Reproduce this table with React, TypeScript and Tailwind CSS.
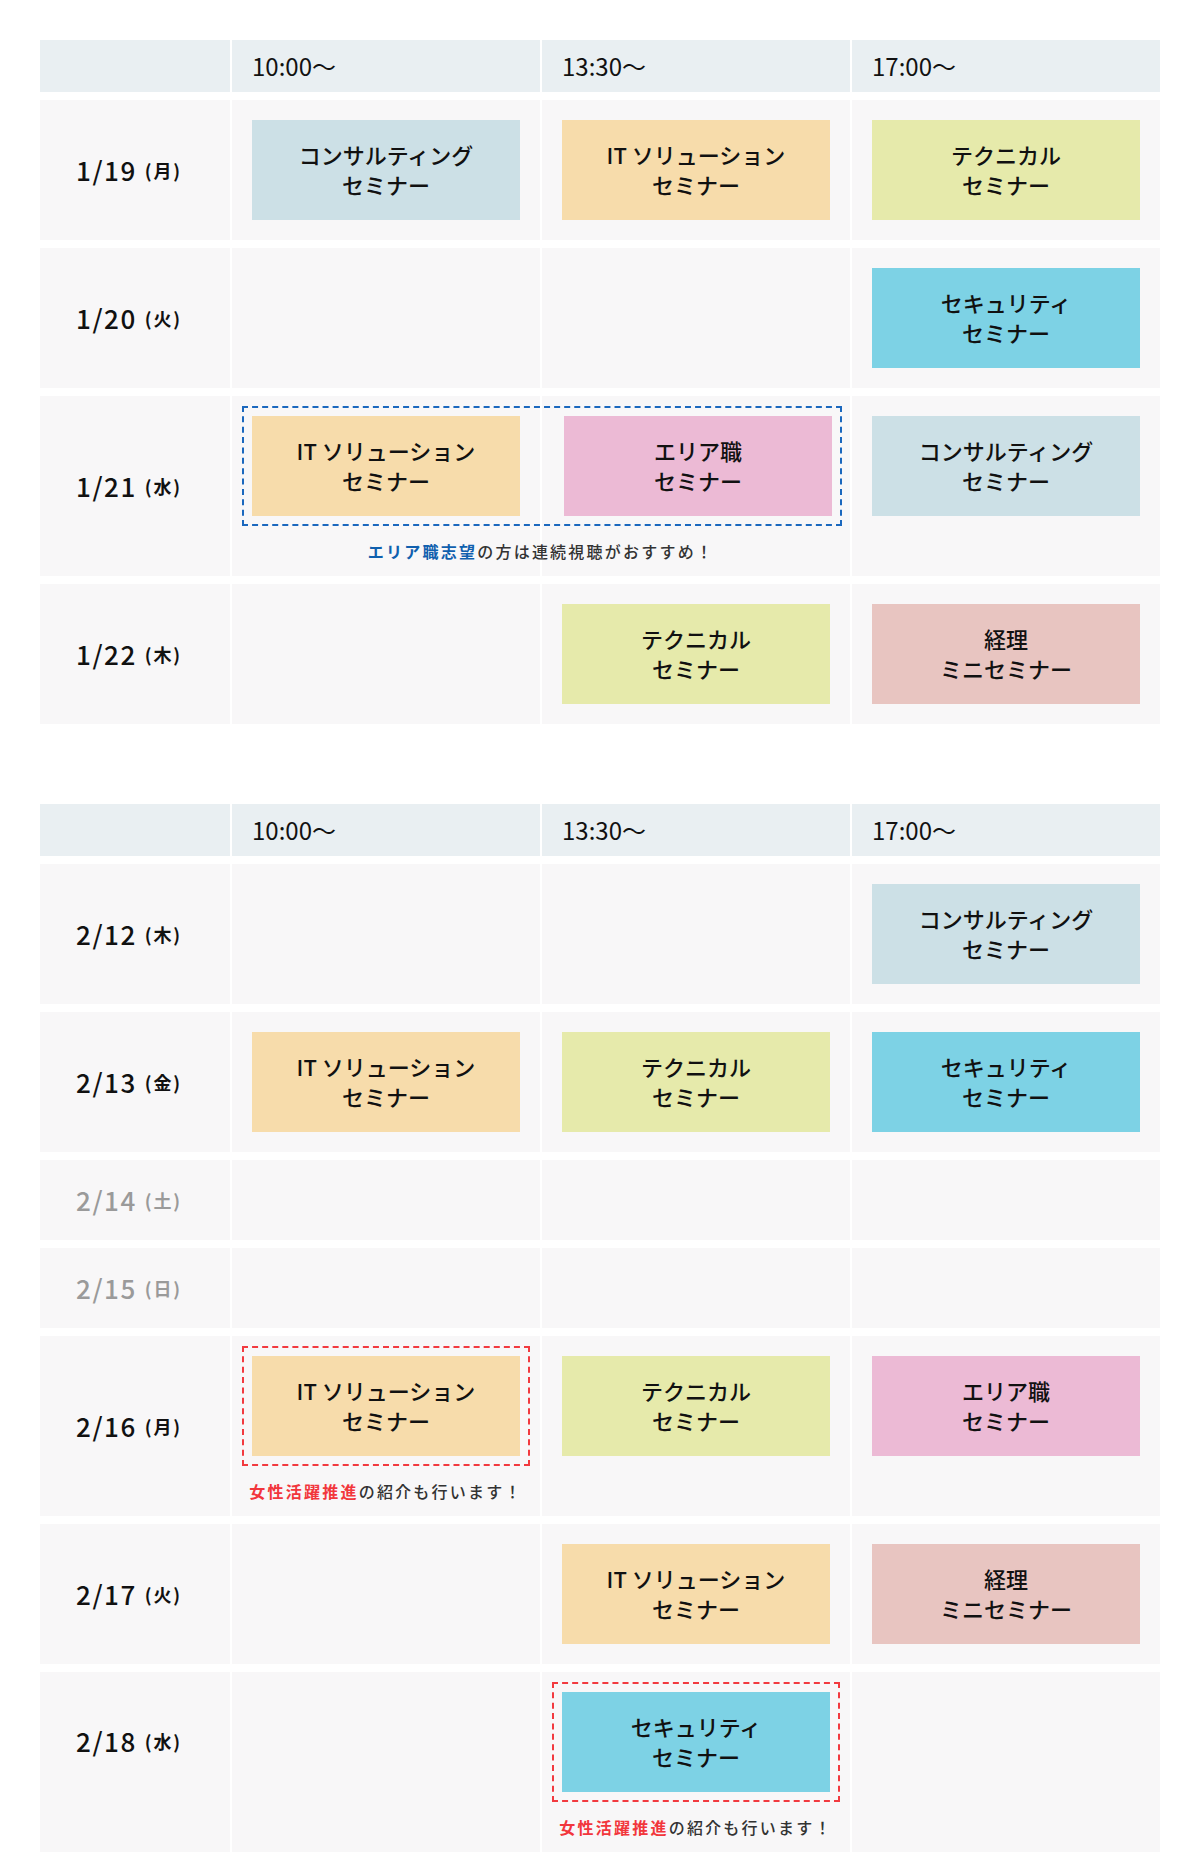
import React from "react";

type Kind = "consult" | "it" | "tech" | "security" | "area" | "account";

const SEMINARS: Record<Kind, { bg: string; lines: string[] }> = {
  consult: { bg: "bg-[#cce0e6]", lines: ["コンサルティング", "セミナー"] },
  it: { bg: "bg-[#f7dcab]", lines: ["IT ソリューション", "セミナー"] },
  tech: { bg: "bg-[#e6eaab]", lines: ["テクニカル", "セミナー"] },
  security: { bg: "bg-[#7dd2e5]", lines: ["セキュリティ", "セミナー"] },
  area: { bg: "bg-[#ecbad5]", lines: ["エリア職", "セミナー"] },
  account: { bg: "bg-[#e8c5c1]", lines: ["経理", "ミニセミナー"] },
};

interface Group {
  start: number;
  span: 1 | 2;
  color: "blue" | "red";
  strong: string;
  rest: string;
}

interface Day {
  date: string;
  dow: string;
  off?: boolean;
  dateTop?: boolean;
  slots: (Kind | null)[];
  group?: Group;
}

const blueNote = { color: "blue" as const, strong: "エリア職志望", rest: "の方は連続視聴がおすすめ！" };
const redNote = { color: "red" as const, strong: "女性活躍推進", rest: "の紹介も行います！" };

const JANUARY: Day[] = [
  { date: "1/19", dow: "月", slots: ["consult", "it", "tech"] },
  { date: "1/20", dow: "火", slots: [null, null, "security"] },
  { date: "1/21", dow: "水", slots: ["it", "area", "consult"], group: { start: 0, span: 2, ...blueNote } },
  { date: "1/22", dow: "木", slots: [null, "tech", "account"] },
];

const FEBRUARY: Day[] = [
  { date: "2/12", dow: "木", slots: [null, null, "consult"] },
  { date: "2/13", dow: "金", slots: ["it", "tech", "security"] },
  { date: "2/14", dow: "土", off: true, slots: [null, null, null] },
  { date: "2/15", dow: "日", off: true, slots: [null, null, null] },
  { date: "2/16", dow: "月", slots: ["it", "tech", "area"], group: { start: 0, span: 1, ...redNote } },
  { date: "2/17", dow: "火", slots: [null, "it", "account"] },
  {
    date: "2/18",
    dow: "水",
    dateTop: true,
    slots: [null, "security", null],
    group: { start: 1, span: 1, ...redNote },
  },
];

const COL_START = ["col-start-2", "col-start-3", "col-start-4"];

const SeminarBox = ({ kind }: { kind: Kind }) => {
  const s = SEMINARS[kind];
  return (
    <div
      className={`${s.bg} w-[268px] h-[100px] pb-[2px] flex flex-col items-center justify-center text-center text-[22px] leading-[30px] font-medium text-[#111]`}
    >
      {s.lines.map((l) => (
        <span key={l}>{l}</span>
      ))}
    </div>
  );
};

const DayRow = ({ day }: { day: Day }) => {
  const { group } = day;
  const inGroup = (i: number) => !!group && i >= group.start && i < group.start + group.span;
  const hasAny = day.slots.some(Boolean);

  return (
    <div className="grid grid-cols-[190px_repeat(3,1fr)] gap-x-[2px]">
      <div
        className={`row-start-1 col-start-1 bg-[#f8f7f8] flex pl-[36px] ${
          day.dateTop ? "items-start pt-[56px]" : "items-center"
        } ${hasAny ? "min-h-[140px]" : "min-h-[80px]"} ${day.off ? "text-[#9a9a9a]" : "text-[#111]"}`}
      >
        <span className="flex items-center h-[26px]">
          <span className="text-[26px] tracking-[0.06em] font-medium leading-none">{day.date}</span>
          <span className="text-[18px] tracking-[0.1em] font-bold leading-none ml-[8px]">({day.dow})</span>
        </span>
      </div>

      {day.slots.map((kind, i) => (
        <div key={i} className={`row-start-1 ${COL_START[i]} bg-[#f8f7f8] ${kind && !inGroup(i) ? "p-[20px]" : ""}`}>
          {kind && !inGroup(i) && <SeminarBox kind={kind} />}
        </div>
      ))}

      {group && (
        <div className={`row-start-1 ${COL_START[group.start]} ${group.span === 2 ? "col-span-2" : "col-span-1"}`}>
          <div
            className={`mt-[10px] ml-[10px] ${group.span === 2 ? "mr-[8px]" : "mr-[10px]"} border-2 border-dashed p-[8px] flex justify-between ${
              group.color === "blue" ? "border-[#1b68be]" : "border-[#f23a3f]"
            }`}
          >
            {day.slots
              .slice(group.start, group.start + group.span)
              .map((k, j) => k && <SeminarBox key={j} kind={k} />)}
          </div>
          <div className="h-[50px] flex items-center justify-center text-[16px] tracking-[0.14em] font-medium text-[#333]">
            <span className={`font-bold ${group.color === "blue" ? "text-[#1060ae]" : "text-[#f2363c]"}`}>
              {group.strong}
            </span>
            {group.rest}
          </div>
        </div>
      )}
    </div>
  );
};

const Schedule = ({ days }: { days: Day[] }) => (
  <div className="flex flex-col gap-[8px]">
    <div className="grid grid-cols-[190px_repeat(3,1fr)] gap-x-[2px] h-[52px]">
      <div className="bg-[#e9eff2]" />
      {["10:00〜", "13:30〜", "17:00〜"].map((t) => (
        <div key={t} className="bg-[#e9eff2] flex items-center pl-[20px] text-[24px] text-[#111] leading-none">
          {t}
        </div>
      ))}
    </div>
    {days.map((d) => (
      <DayRow key={d.date} day={d} />
    ))}
  </div>
);

export default function App() {
  return (
    <div className="bg-white min-h-screen px-[40px] pt-[40px] pb-[40px] font-['Noto_Sans_CJK_JP','Noto_Sans',sans-serif]">
      <div className="flex flex-col gap-[80px]">
        <Schedule days={JANUARY} />
        <Schedule days={FEBRUARY} />
      </div>
    </div>
  );
}
